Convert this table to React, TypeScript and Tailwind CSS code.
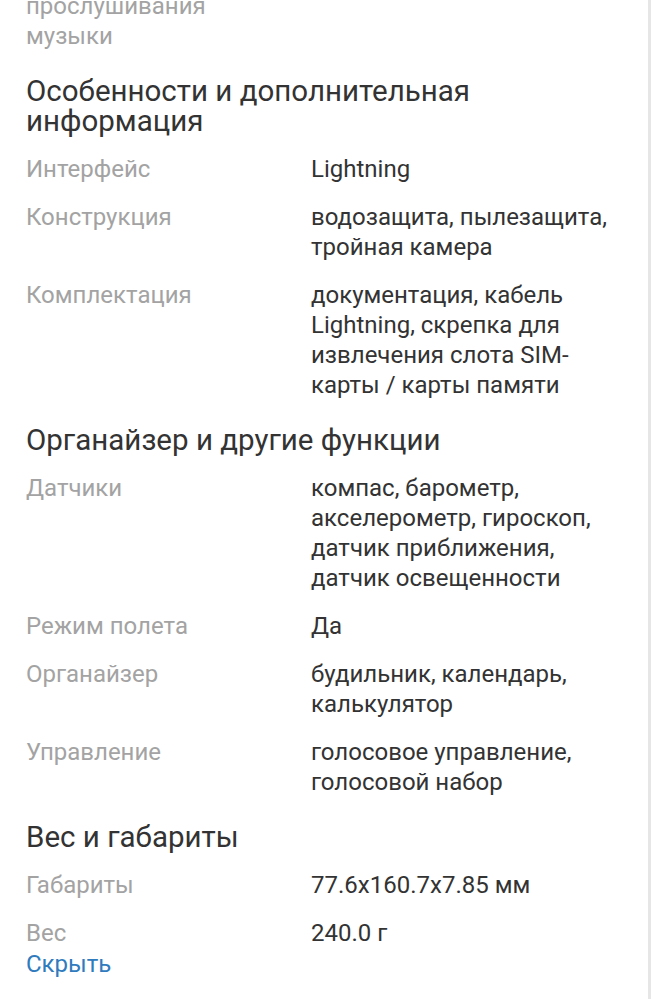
const sections: Array<{ title: string[]; rows: Array<{ label: string[]; value: string[] }> }> = [
  {
    title: ["Особенности и дополнительная", "информация"],
    rows: [
      { label: ["Интерфейс"], value: ["Lightning"] },
      { label: ["Конструкция"], value: ["водозащита, пылезащита,", "тройная камера"] },
      {
        label: ["Комплектация"],
        value: ["документация, кабель", "Lightning, скрепка для", "извлечения слота SIM-", "карты / карты памяти"],
      },
    ],
  },
  {
    title: ["Органайзер и другие функции"],
    rows: [
      {
        label: ["Датчики"],
        value: ["компас, барометр,", "акселерометр, гироскоп,", "датчик приближения,", "датчик освещенности"],
      },
      { label: ["Режим полета"], value: ["Да"] },
      { label: ["Органайзер"], value: ["будильник, календарь,", "калькулятор"] },
      { label: ["Управление"], value: ["голосовое управление,", "голосовой набор"] },
    ],
  },
  {
    title: ["Вес и габариты"],
    rows: [
      { label: ["Габариты"], value: ["77.6x160.7x7.85 мм"] },
      { label: ["Вес"], value: ["240.0 г"] },
    ],
  },
];

function Lines({ lines }: { lines: string[] }) {
  return (
    <>
      {lines.map((line, i) => (
        <div key={i} className="whitespace-nowrap">{line}</div>
      ))}
    </>
  );
}

function SpecRow({ label, value }: { label: string[]; value: string[] }) {
  return (
    <div className="mt-[18px] flex text-[24px] leading-[30px]">
      <div className="w-[285px] shrink-0 text-[#a3a3a3]"><Lines lines={label} /></div>
      <div className="flex-1 text-[#333333]"><Lines lines={value} /></div>
    </div>
  );
}

export default function App() {
  return (
    <div
      className="h-[999px] w-[651px] overflow-hidden border-r-[3px] border-[#e6e6e6] bg-white pl-[26px]"
      style={{ fontFamily: "Roboto, 'Noto Sans', sans-serif" }}
    >
      {/* tail of the previous section, scrolled past the top */}
      <div className="mt-[-9px] text-[24px] leading-[30px] text-[#a3a3a3]">
        <div>прослушивания</div>
        <div>музыки</div>
      </div>
      {sections.map((section, i) => (
        <section key={i}>
          <h2 className="mt-[25px] text-[29.5px] leading-[30px] text-[#333333]"><Lines lines={section.title} /></h2>
          {section.rows.map((row, j) => (
            <SpecRow key={j} label={row.label} value={row.value} />
          ))}
        </section>
      ))}
      <button type="button" className="mt-[1px] block text-[24px] leading-[30px] text-[#2f7bbd]">Скрыть</button>
    </div>
  );
}
